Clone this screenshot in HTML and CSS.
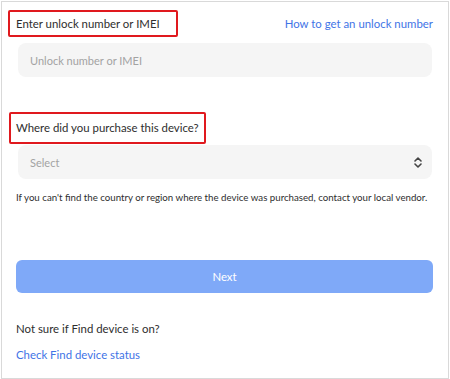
FILE: index.html
```
<!DOCTYPE html>
<html lang="en">
<head>
<meta charset="utf-8">
<link rel="stylesheet" href="styles.css">
</head>
<body>
<div class="frame">
  <div class="row-top">
    <span class="label marked mark-1">Enter unlock number or IMEI</span>
    <a class="link">How to get an unlock number</a>
  </div>
  <div class="field">
    <span class="placeholder">Unlock number or IMEI</span>
  </div>
  <div class="row-label">
    <span class="label marked mark-2">Where did you purchase this device?</span>
  </div>
  <div class="field select">
    <span class="placeholder">Select</span>
    <svg class="chev" width="8" height="11" viewBox="0 0 8 11"><path d="M1 4 L4 1 L7 4 M1 7 L4 10 L7 7" fill="none" stroke="#444" stroke-width="1.6" stroke-linecap="round" stroke-linejoin="round"/></svg>
  </div>
  <p class="helper">If you can't find the country or region where the device was purchased, contact your local vendor.</p>
  <div class="btn">Next</div>
  <p class="note">Not sure if Find device is on?</p>
  <a class="link status">Check Find device status</a>
</div>
</body>
</html>
```
FILE: styles.css
```
html, body { margin: 0; padding: 0; background: #fff; }
body { font-family: Lato, "Noto Sans", sans-serif; color: #333; }
.frame {
  margin: 1px 0 0 1px;
  width: 448px;
  height: 378px;
  box-sizing: border-box;
  border: 1px solid #d9d9d9;
  padding: 9px 15px 0 14px;
  display: flex;
  flex-direction: column;
}
.row-top {
  height: 25px;
  display: flex;
  align-items: center;
  justify-content: space-between;
}
.label { font-size: 11.4px; color: #2e2e2e; position: relative; line-height: 18px; }
.marked::before {
  content: "";
  position: absolute;
  border: 2px solid #e0191e;
  border-radius: 2px;
}
.mark-1::before { left: -8px; right: -18px; top: -5px; bottom: -4px; }
.mark-2::before { left: -7px; right: -7px; top: -7px; bottom: -7px; }
.link { color: #3f74e6; font-size: 11.4px; line-height: 16px; }
.field {
  margin: 7px 1px 0 2px;
  height: 34px;
  background: #f5f5f5;
  border-radius: 8px;
  display: flex;
  align-items: center;
  padding: 0 12px;
}
.placeholder { color: #a3a3a3; font-size: 11px; }
.row-label {
  margin-top: 35px;
  height: 31px;
  display: flex;
  align-items: center;
}
.select { margin-top: 2px; justify-content: space-between; padding-right: 10px; }
.chev { display: block; }
.helper { margin: 10px 0 0; font-size: 9.7px; line-height: 16px; color: #2e2e2e; white-space: nowrap; }
.btn {
  margin-top: 55px;
  height: 33px;
  border-radius: 6px;
  background: #7fa9f8;
  color: #fff;
  font-size: 11.4px;
  display: flex;
  align-items: center;
  justify-content: center;
}
.note { margin: 28px 0 0; font-size: 11.4px; line-height: 16px; color: #2e2e2e; }
.status { margin-top: 10px; display: block; font-size: 11.4px; }
```
